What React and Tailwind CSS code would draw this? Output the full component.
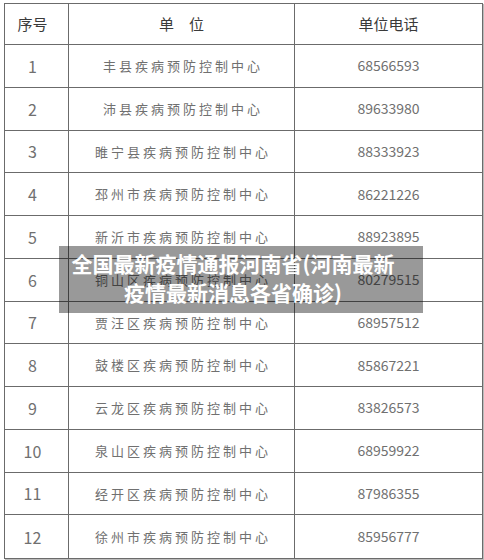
import React from "react";

const rows = [
  ["1", "丰县疾病预防控制中心", "68566593"],
  ["2", "沛县疾病预防控制中心", "89633980"],
  ["3", "睢宁县疾病预防控制中心", "88333923"],
  ["4", "邳州市疾病预防控制中心", "86221226"],
  ["5", "新沂市疾病预防控制中心", "88923895"],
  ["6", "铜山区疾病预防控制中心", "80279515"],
  ["7", "贾汪区疾病预防控制中心", "68957512"],
  ["8", "鼓楼区疾病预防控制中心", "85867221"],
  ["9", "云龙区疾病预防控制中心", "83826573"],
  ["10", "泉山区疾病预防控制中心", "68959922"],
  ["11", "经开区疾病预防控制中心", "87986355"],
  ["12", "徐州市疾病预防控制中心", "85956777"],
];

export default function App() {
  return (
    <div
      className="relative w-[484px] h-[560px] bg-white overflow-hidden"
      style={{ fontFamily: '"Noto Sans CJK SC", "Noto Sans", sans-serif' }}
    >
      {/* table */}
      <div className="ml-[4px] mt-[3px] w-[479px] border border-[#6b6b6b] shadow-[1px_1px_0_#bbb]">
        {/* header */}
        <div className="flex h-[41px] border-b border-[#6b6b6b] text-[15px] text-[#3a3a3a]">
          <div className="w-[64px] flex items-center justify-center pr-2 border-r border-[#6b6b6b]">
            序号
          </div>
          <div className="w-[226px] flex items-center justify-center border-r border-[#6b6b6b]">
            单　位
          </div>
          <div className="flex-1 flex items-center justify-center">单位电话</div>
        </div>

        {rows.map(([no, name, tel], i) => (
          <div
            key={no}
            className={
              "flex h-[42.75px] text-[#707070] " +
              (i < rows.length - 1 ? "border-b border-[#6b6b6b]" : "")
            }
          >
            <div className="w-[64px] flex items-center justify-center pr-2 border-r border-[#6b6b6b] text-[16px]">
              {no}
            </div>
            <div className="w-[226px] flex items-center justify-center border-r border-[#6b6b6b] text-[13px] tracking-[3px] pl-[3px]">
              {name}
            </div>
            <div className="flex-1 flex items-center justify-center text-[14px]">
              {tel}
            </div>
          </div>
        ))}
      </div>

      {/* title overlay */}
      <div className="absolute left-[59px] top-[246px] w-[364px] h-[67px] bg-black/40 pt-[3px] pr-4 text-center text-white font-bold text-[21px] leading-[29px]">
        全国最新疫情通报河南省(河南最新
        <br />
        疫情最新消息各省确诊)
      </div>
    </div>
  );
}
